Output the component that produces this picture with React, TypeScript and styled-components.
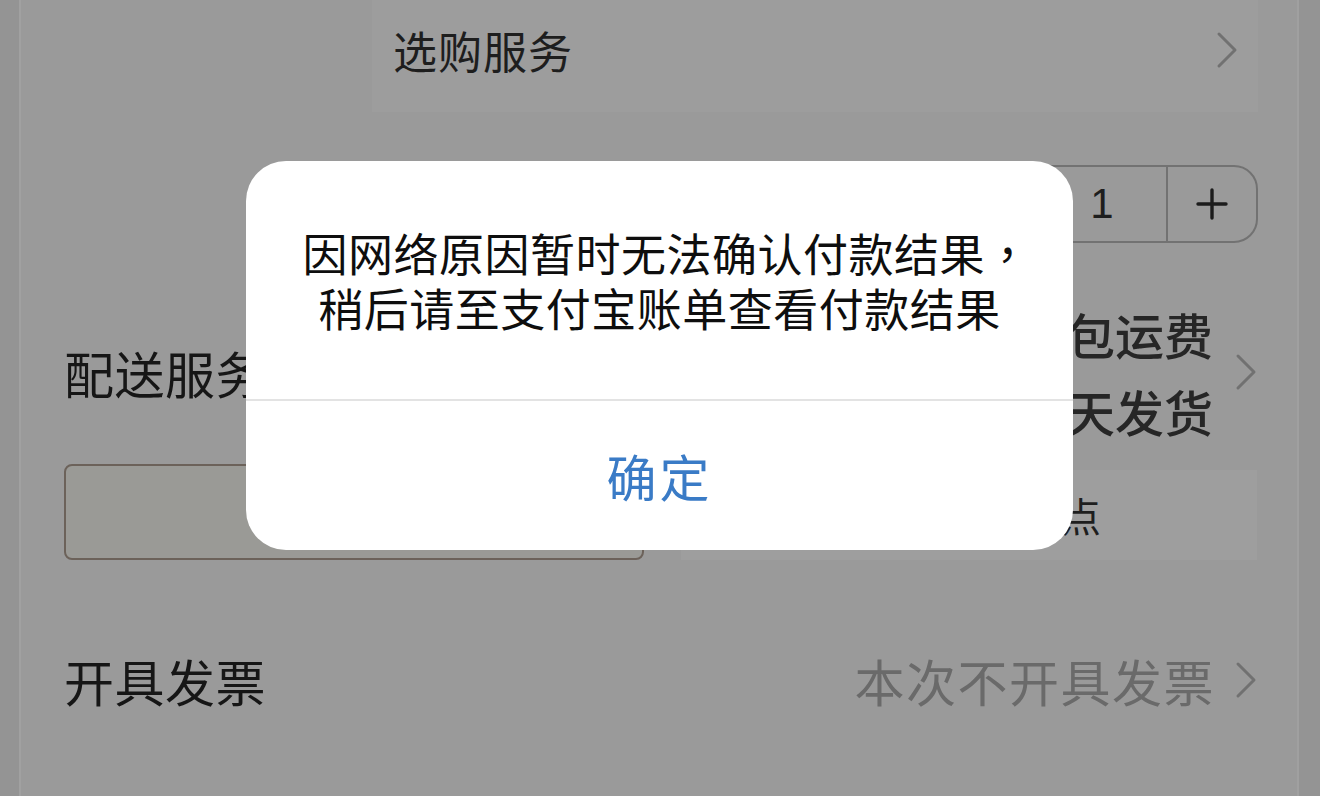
import React from "react";
import styled, { createGlobalStyle } from "styled-components";

const GlobalStyle = createGlobalStyle`
  html, body {
    margin: 0;
    padding: 0;
    background: #949494;
  }
  body {
    font-family: "Noto Sans CJK SC", "Noto Sans", sans-serif;
  }
`;

const Chevron: React.FC<{ color?: string }> = ({ color = "#717171" }) => (
  <svg width="22" height="38" viewBox="0 0 22 38" fill="none">
    <polyline
      points="3,3 19,19 3,35"
      stroke={color}
      strokeWidth="3"
      strokeLinecap="round"
      strokeLinejoin="round"
    />
  </svg>
);

const PlusIcon = () => (
  <svg width="32" height="32" viewBox="0 0 32 32">
    <path d="M16 2 V30 M2 16 H30" stroke="#1c1c1c" strokeWidth="3.4" strokeLinecap="round" />
  </svg>
);

const App: React.FC = () => {
  return (
    <>
      <GlobalStyle />
      <Screen>
        <Card>
          <ServiceRow>
            <ServiceBox>
              <ServiceLabel>选购服务</ServiceLabel>
              <Chevron />
            </ServiceBox>
          </ServiceRow>

          <QtyRow>
            <Stepper>
              <StepCell $width={110}>−</StepCell>
              <StepNumber>1</StepNumber>
              <StepCell $width={88}>
                <PlusIcon />
              </StepCell>
            </Stepper>
          </QtyRow>

          <DeliveryRow>
            <Label>配送服务</Label>
            <DeliveryRight>
              <DeliveryText>
                <DeliveryLine>普通快递 免费包运费</DeliveryLine>
                <DeliveryLine>预计付款后3天发货</DeliveryLine>
              </DeliveryText>
              <Chevron />
            </DeliveryRight>
          </DeliveryRow>

          <MessageRow>
            <MessageInput />
            <HintBox>请与商家确认时间地点</HintBox>
          </MessageRow>

          <InvoiceRow>
            <Label>开具发票</Label>
            <InvoiceRight>
              <InvoiceValue>本次不开具发票</InvoiceValue>
              <Chevron />
            </InvoiceRight>
          </InvoiceRow>
        </Card>

        <Overlay>
          <Dialog>
            <DialogBody>
              <DialogLine $shift={14}>
                因网络原因暂时无法确认付款结果<Comma>，</Comma>
              </DialogLine>
              <DialogLine>稍后请至支付宝账单查看付款结果</DialogLine>
            </DialogBody>
            <DialogButton>确定</DialogButton>
          </Dialog>
        </Overlay>
      </Screen>
    </>
  );
};

export default App;

const Screen = styled.div`
  position: relative;
  width: 1320px;
  height: 796px;
  overflow: hidden;
  background: #949494;
`;

const Card = styled.div`
  box-sizing: border-box;
  margin: 0 21px 0 19px;
  height: 796px;
  padding: 0 40px 0 43px;
  background: #9a9a9a;
  border-left: 2px solid #a1a1a1;
  border-right: 2px solid #a0a0a0;
  display: flex;
  flex-direction: column;
`;

const ServiceRow = styled.div`
  display: flex;
  justify-content: flex-end;
  height: 112px;
`;

const ServiceBox = styled.div`
  box-sizing: border-box;
  width: 886px;
  height: 112px;
  margin-right: -1px;
  padding: 0 20px 12px 21px;
  background: #9d9d9d;
  display: flex;
  align-items: center;
  justify-content: space-between;
`;

const ServiceLabel = styled.span`
  font-size: 44px;
  color: #1e1e1e;
  letter-spacing: 1px;
`;

const QtyRow = styled.div`
  display: flex;
  justify-content: flex-end;
  margin-top: 53px;
  margin-right: -1px;
`;

const Stepper = styled.div`
  display: flex;
  height: 78px;
  box-sizing: border-box;
  border: 2px solid #727272;
  border-radius: 24px;
  overflow: hidden;
`;

const StepCell = styled.div<{ $width: number }>`
  width: ${(p) => p.$width}px;
  display: flex;
  align-items: center;
  justify-content: center;
  font-size: 40px;
  color: #222;
`;

const StepNumber = styled.div`
  width: 128px;
  display: flex;
  align-items: center;
  justify-content: center;
  border-left: 2px solid #727272;
  border-right: 2px solid #727272;
  font-family: "Liberation Sans", Arial, sans-serif;
  font-size: 42px;
  color: #1e1e1e;
`;

const Label = styled.span`
  font-size: 50px;
  letter-spacing: 0.5px;
  color: #161616;
`;

const DeliveryRow = styled.div`
  display: flex;
  align-items: center;
  justify-content: space-between;
  margin-top: 52px;
`;

const DeliveryRight = styled.div`
  display: flex;
  align-items: center;
  gap: 22px;
`;

const DeliveryText = styled.div`
  display: flex;
  flex-direction: column;
  align-items: flex-end;
`;

const DeliveryLine = styled.span`
  font-size: 49px;
  line-height: 77px;
  font-weight: 500;
  color: #262626;
`;

const MessageRow = styled.div`
  display: flex;
  align-items: center;
  justify-content: space-between;
  margin-top: 15px;
`;

const MessageInput = styled.div`
  box-sizing: border-box;
  width: 580px;
  height: 96px;
  border: 2px solid #6c625a;
  border-radius: 8px;
  background: #9a9a96;
`;

const HintBox = styled.div`
  box-sizing: border-box;
  width: 576px;
  height: 90px;
  margin-top: 6px;
  padding-left: 20px;
  display: flex;
  align-items: center;
  background: #9e9e9e;
  font-size: 40px;
  color: #1e1e1e;
  white-space: nowrap;
  overflow: hidden;
`;

const InvoiceRow = styled.div`
  display: flex;
  align-items: center;
  justify-content: space-between;
  height: 96px;
  margin-top: 72px;
`;

const InvoiceRight = styled.div`
  display: flex;
  align-items: center;
  gap: 20px;
`;

const InvoiceValue = styled.span`
  font-size: 50px;
  letter-spacing: 1.5px;
  color: #6a6a6a;
`;

const Overlay = styled.div`
  position: absolute;
  inset: 0;
  display: flex;
  justify-content: center;
  align-items: flex-start;
  padding-top: 161px;
  padding-right: 1px;
`;

const Dialog = styled.div`
  width: 827px;
  height: 389px;
  background: #ffffff;
  border-radius: 40px;
  display: flex;
  flex-direction: column;
  overflow: hidden;
`;

const DialogBody = styled.div`
  box-sizing: border-box;
  height: 240px;
  padding-top: 64px;
  display: flex;
  flex-direction: column;
  align-items: center;
  border-bottom: 2px solid #e3e3e3;
`;

const DialogLine = styled.div<{ $shift?: number }>`
  padding-left: ${(p) => p.$shift ?? 0}px;
  font-size: 45px;
  line-height: 55px;
  letter-spacing: 0.5px;
  color: #0e0e0e;
  white-space: nowrap;
`;

const Comma = styled.span`
  font-family: "Noto Sans CJK TC", "Noto Sans CJK SC", sans-serif;
`;

const DialogButton = styled.div`
  flex: 1;
  display: flex;
  align-items: center;
  justify-content: center;
  padding-bottom: 2px;
  font-size: 50px;
  letter-spacing: 3px;
  color: #3a7bc6;
`;
